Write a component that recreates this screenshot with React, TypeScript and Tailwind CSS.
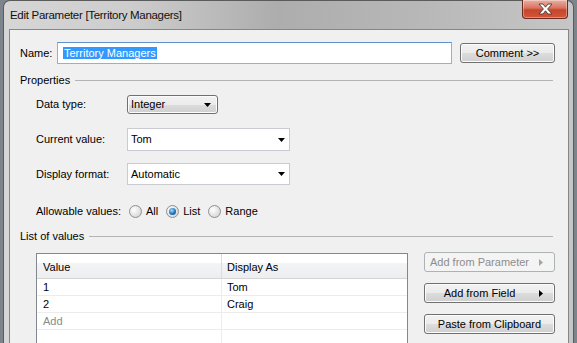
import React from "react";

const btn =
  "flex items-center justify-center rounded-[3px] border border-[#707070] bg-[linear-gradient(#f2f2f2,#ebebeb_50%,#dddddd_50%,#cfcfcf)] shadow-[inset_0_0_0_1px_#fcfcfc]";

const DownArrow = ({ color = "#000" }: { color?: string }) => (
  <svg width="7" height="4" viewBox="0 0 7 4">
    <path d="M0 0h7L3.5 4z" fill={color} />
  </svg>
);

const RightArrow = ({ color = "#000" }: { color?: string }) => (
  <svg width="4" height="7" viewBox="0 0 4 7">
    <path d="M0 0v7l4-3.5z" fill={color} />
  </svg>
);

const Radio = ({ label, checked }: { label: string; checked?: boolean }) => (
  <div className="flex items-center gap-[4px]">
    <span className="flex h-[13px] w-[13px] items-center justify-center rounded-full border border-[#8e8f8f] bg-[radial-gradient(circle_at_35%_35%,#ffffff,#e0e0e0_60%,#cfcfcf)]">
      {checked && (
        <span className="h-[7px] w-[7px] rounded-full bg-[radial-gradient(circle_at_40%_35%,#a8dcff,#1b74bd_55%,#0b4a85)]" />
      )}
    </span>
    <span>{label}</span>
  </div>
);

const Heading = ({ text }: { text: string }) => (
  <div className="flex h-[14px] items-center pl-[10px] pr-[15px]">
    <span>{text}</span>
    <div className="ml-[5px] h-px flex-1 bg-[#b4b4b4]" />
  </div>
);

const Combo = ({ value, width }: { value: string; width: string }) => (
  <div
    className={`flex h-full items-center justify-between border border-[#c9cbd0] bg-white pl-[3px] pr-[4px] ${width}`}
  >
    <span>{value}</span>
    <DownArrow />
  </div>
);

const rows = [
  { value: "1", display: "Tom" },
  { value: "2", display: "Craig" },
];

export default function App() {
  return (
    <div className="h-[343px] w-[577px] overflow-hidden bg-[#7d848c] pl-[3px] font-['Liberation_Sans',Arial,sans-serif] text-[11px] text-black">
      <div className="flex h-[400px] w-[571px] flex-col rounded-t-[7px] border border-b-0 border-[#5b5b5b] bg-[linear-gradient(90deg,#d6d6d6,#cdcdcd_22%,#adadad_48%,#b7b7b7_72%,#c6c6c6)] pl-[5px] pr-[4px]">
        {/* Title bar */}
        <div className="flex h-[28px] shrink-0 items-start justify-between">
          <span className="ml-[1px] mt-[7px] text-[11.5px] leading-[14px] tracking-[-0.3px] text-[#111]">
            Edit Parameter [Territory Managers]
          </span>
          <div className="-mt-[1px] mr-[1px] flex h-[19px] w-[46px] items-center justify-center rounded-b-[4px] border border-t-0 border-[#6b2a1f] bg-[linear-gradient(#eab0a3,#d9725e_45%,#c7452b_55%,#d0563b)] shadow-[inset_0_0_0_1px_rgba(255,255,255,0.35)]">
            <svg width="15" height="12" viewBox="0 0 15 12">
              <path
                d="M1 1h4L7.5 4.2 10 1h4L9.6 6 14 11h-4L7.5 7.8 5 11H1l4.4-5z"
                fill="#fff"
                stroke="#4a3a36"
                strokeWidth="0.9"
              />
            </svg>
          </div>
        </div>

        {/* Content panel */}
        <div className="flex min-h-0 flex-1 flex-col border border-[#868686] bg-[#f0f0f0]">
          {/* Name */}
          <div className="mt-[12px] flex h-[22px] shrink-0 items-center pl-[10px]">
            <span className="w-[37px]">Name:</span>
            <div className="flex h-[22px] w-[395px] items-center border border-[#86b5e0] border-t-[#5c93c9] bg-white pl-[5px]">
              <span className="bg-[#3399ff] px-[1px] leading-[12px] text-white">
                Territory Managers
              </span>
            </div>
            <div className={`${btn} ml-[8px] h-[20px] w-[95px]`}>Comment &gt;&gt;</div>
          </div>

          <div className="mt-[9px] shrink-0">
            <Heading text="Properties" />
          </div>

          {/* Data type */}
          <div className="mt-[8px] flex h-[19px] shrink-0 items-center pl-[26px]">
            <span className="w-[91px]">Data type:</span>
            <div className={`${btn} h-[19px] w-[91px] !justify-between pl-[3px] pr-[6px]`}>
              <span>Integer</span>
              <DownArrow />
            </div>
          </div>

          {/* Current value */}
          <div className="mt-[14px] flex h-[23px] shrink-0 items-center pl-[26px]">
            <span className="w-[91px]">Current value:</span>
            <Combo value="Tom" width="w-[163px]" />
          </div>

          {/* Display format */}
          <div className="mt-[12px] flex h-[22px] shrink-0 items-center pl-[26px]">
            <span className="w-[91px]">Display format:</span>
            <Combo value="Automatic" width="w-[163px]" />
          </div>

          {/* Allowable values */}
          <div className="mt-[18px] flex h-[16px] shrink-0 items-center pl-[26px]">
            <span className="w-[93px]">Allowable values:</span>
            <div className="flex items-center gap-[8px]">
              <Radio label="All" />
              <Radio label="List" checked />
              <Radio label="Range" />
            </div>
          </div>

          <div className="mt-[10px] shrink-0">
            <Heading text="List of values" />
          </div>

          {/* Values table + buttons */}
          <div className="mt-[10px] flex shrink-0 items-start pl-[26px]">
            <div className="h-[120px] w-[372px] border border-[#828790] bg-white">
              <div className="flex h-[25px] border-b border-[#d5d5d5] bg-[linear-gradient(#ffffff,#ffffff_38%,#f3f4f6_38%,#eceef0)]">
                <div className="flex w-[185px] items-center border-r border-[#dcdcdc] pl-[6px] pt-[2px]">
                  Value
                </div>
                <div className="flex flex-1 items-center pl-[5px] pt-[2px]">Display As</div>
              </div>
              {rows.map((r) => (
                <div key={r.value} className="flex h-[17px] border-b border-[#ececec]">
                  <div className="flex w-[185px] items-center border-r border-[#ececec] pl-[6px]">
                    {r.value}
                  </div>
                  <div className="flex flex-1 items-center pl-[5px]">{r.display}</div>
                </div>
              ))}
              <div className="flex h-[17px] border-b border-[#ececec]">
                <div className="flex w-[185px] items-center border-r border-[#ececec] pl-[6px] text-[#8a8a8a]">
                  Add
                </div>
                <div className="flex-1" />
              </div>
              <div className="flex h-[40px]">
                <div className="w-[185px] border-r border-[#ececec]" />
              </div>
            </div>

            <div className="-mt-[1px] ml-[16px] flex w-[131px] flex-col gap-[11px]">
              <div className="flex h-[20px] items-center rounded-[3px] border border-[#adb2b5] bg-[#f4f4f4] text-[#8d8d8d]">
                <span className="flex-1 text-center">Add from Parameter</span>
                <span className="w-[20px] pl-[5px]">
                  <RightArrow color="#a5a5a5" />
                </span>
              </div>
              <div className={`${btn} h-[20px] !justify-start`}>
                <span className="flex-1 text-center">Add from Field</span>
                <span className="w-[20px] pl-[5px]">
                  <RightArrow />
                </span>
              </div>
              <div className={`${btn} h-[20px]`}>Paste from Clipboard</div>
            </div>
          </div>
        </div>
      </div>
    </div>
  );
}
